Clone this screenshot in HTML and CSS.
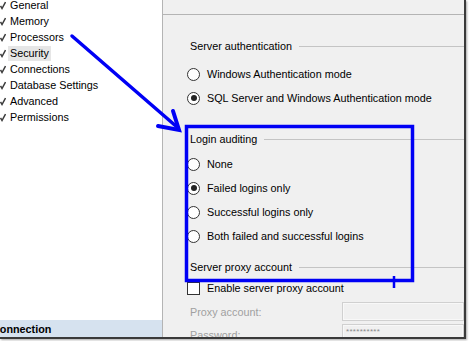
FILE: index.html
```html
<!DOCTYPE html>
<html>
<head>
<meta charset="utf-8">
<link rel="stylesheet" href="styles.css">
</head>
<body>
<div class="frame">
  <div class="left">
    <div class="nav">
      <div class="nav-item"><svg class="ico" viewBox="0 0 6 9" width="6" height="9"><path d="M0.5 5 L2 7.5 L5.5 1" fill="none" stroke="#3c3c3c" stroke-width="1.5"/></svg><span class="nav-label">General</span></div>
      <div class="nav-item"><svg class="ico" viewBox="0 0 6 9" width="6" height="9"><path d="M0.5 5 L2 7.5 L5.5 1" fill="none" stroke="#3c3c3c" stroke-width="1.5"/></svg><span class="nav-label">Memory</span></div>
      <div class="nav-item"><svg class="ico" viewBox="0 0 6 9" width="6" height="9"><path d="M0.5 5 L2 7.5 L5.5 1" fill="none" stroke="#3c3c3c" stroke-width="1.5"/></svg><span class="nav-label">Processors</span></div>
      <div class="nav-item"><svg class="ico" viewBox="0 0 6 9" width="6" height="9"><path d="M0.5 5 L2 7.5 L5.5 1" fill="none" stroke="#3c3c3c" stroke-width="1.5"/></svg><span class="nav-label selected">Security</span></div>
      <div class="nav-item"><svg class="ico" viewBox="0 0 6 9" width="6" height="9"><path d="M0.5 5 L2 7.5 L5.5 1" fill="none" stroke="#3c3c3c" stroke-width="1.5"/></svg><span class="nav-label">Connections</span></div>
      <div class="nav-item"><svg class="ico" viewBox="0 0 6 9" width="6" height="9"><path d="M0.5 5 L2 7.5 L5.5 1" fill="none" stroke="#3c3c3c" stroke-width="1.5"/></svg><span class="nav-label">Database Settings</span></div>
      <div class="nav-item"><svg class="ico" viewBox="0 0 6 9" width="6" height="9"><path d="M0.5 5 L2 7.5 L5.5 1" fill="none" stroke="#3c3c3c" stroke-width="1.5"/></svg><span class="nav-label">Advanced</span></div>
      <div class="nav-item"><svg class="ico" viewBox="0 0 6 9" width="6" height="9"><path d="M0.5 5 L2 7.5 L5.5 1" fill="none" stroke="#3c3c3c" stroke-width="1.5"/></svg><span class="nav-label">Permissions</span></div>
    </div>
    <div class="conn-bar"><span class="conn-text">Connection</span></div>
  </div>
  <div class="right">
    <div class="toolbar"></div>
    <div class="content">
      <div class="group-head first"><span>Server authentication</span><div class="rule"></div></div>
      <div class="options opts1">
        <div class="opt"><span class="radio"></span><span>Windows Authentication mode</span></div>
        <div class="opt"><span class="radio checked"></span><span>SQL Server and Windows Authentication mode</span></div>
      </div>
      <div class="group-head second"><span>Login auditing</span><div class="rule"></div></div>
      <div class="options opts2">
        <div class="opt"><span class="radio"></span><span>None</span></div>
        <div class="opt"><span class="radio checked"></span><span>Failed logins only</span></div>
        <div class="opt"><span class="radio"></span><span>Successful logins only</span></div>
        <div class="opt"><span class="radio"></span><span>Both failed and successful logins</span></div>
      </div>
      <div class="group-head third"><span>Server proxy account</span><div class="rule"></div></div>
      <div class="check-row"><span class="checkbox"></span><span>Enable server proxy account</span></div>
      <div class="field-row proxy"><span class="field-label">Proxy account:</span><div class="textbox"></div></div>
      <div class="field-row pass"><span class="field-label">Password:</span><div class="textbox"><span class="stars">**********</span></div></div>
    </div>
  </div>
</div>
<svg class="annot" width="469" height="341" viewBox="0 0 469 341">
  <line x1="72" y1="36" x2="177" y2="127" stroke="#0000f5" stroke-width="3.5" stroke-linecap="round"/>
  <polyline points="158,126 179,130 173,111" fill="none" stroke="#0000f5" stroke-width="4" stroke-linejoin="miter" stroke-linecap="round"/>
  <rect x="186.5" y="126.5" width="226" height="154" fill="none" stroke="#0000f5" stroke-width="3.5"/>
  <line x1="394" y1="276" x2="394" y2="288" stroke="#0000f5" stroke-width="2.5"/>
</svg>
</body>
</html>
```
FILE: styles.css
```css
html, body {
  margin: 0;
  padding: 0;
}
body {
  width: 469px;
  height: 341px;
  background: #ffffff;
  position: relative;
  overflow: hidden;
  font-family: "Liberation Sans", Arial, sans-serif;
  font-size: 10.8px;
  color: #000;
}
.frame {
  display: flex;
  width: 466px;
  height: 339px;
  box-sizing: border-box;
  border-right: 2px solid #3a3a3a;
  border-bottom: 2px solid #3a3a3a;
  box-shadow: 1px 1px 2px rgba(0, 0, 0, 0.35);
  overflow: hidden;
}
.left {
  width: 162px;
  flex: none;
  background: #ffffff;
  border-right: 1px solid #b4b4b4;
  display: flex;
  flex-direction: column;
}
.nav {
  margin-top: -3px;
}
.nav-item {
  height: 16px;
  display: flex;
  align-items: center;
}
.ico {
  flex: none;
  margin-right: 4px;
}
.nav-label {
  white-space: nowrap;
}
.nav-label.selected {
  background: #e6e6e6;
  margin-left: -2px;
  padding: 0 2px 0 2px;
  line-height: 15px;
}
.conn-bar {
  margin-top: auto;
  height: 17px;
  background: #d6e2ef;
  display: flex;
  align-items: center;
  overflow: hidden;
  font-weight: bold;
}
.conn-text {
  margin-left: -8px;
  white-space: nowrap;
}
.right {
  flex: 1;
  min-width: 0;
  background: #f0f0f0;
  display: flex;
  flex-direction: column;
  overflow: hidden;
}
.toolbar {
  height: 14px;
  flex: none;
  border-bottom: 1px solid #b4b4b4;
}
.content {
  padding-left: 24px;
}
.group-head {
  display: flex;
  align-items: center;
  height: 14px;
  padding-left: 3px;
  white-space: nowrap;
}
.group-head.first { margin-top: 24px; }
.group-head.second { margin-top: 22px; }
.group-head.third { margin-top: 12px; }
.rule {
  flex: 1;
  border-top: 1px solid #c4c4c4;
  margin-left: 7px;
}
.opts1 { margin-top: 9px; }
.opts2 { margin-top: 6px; }
.opt {
  height: 24px;
  display: flex;
  align-items: center;
  white-space: nowrap;
}
.radio {
  width: 13px;
  height: 13px;
  flex: none;
  box-sizing: border-box;
  border: 1px solid #333;
  border-radius: 50%;
  background: #fff;
  margin-right: 7px;
  position: relative;
}
.radio.checked::after {
  content: "";
  position: absolute;
  left: 2.5px;
  top: 2.5px;
  width: 6px;
  height: 6px;
  border-radius: 50%;
  background: #222;
}
.check-row {
  margin-top: 4px;
  height: 20px;
  display: flex;
  align-items: center;
  white-space: nowrap;
}
.checkbox {
  width: 13px;
  height: 13px;
  flex: none;
  box-sizing: border-box;
  border: 1px solid #333;
  background: #fff;
  margin-right: 7px;
}
.field-row {
  display: flex;
  align-items: center;
  height: 19px;
  padding-left: 3px;
}
.field-row.proxy { margin-top: 4px; }
.field-row.pass { margin-top: 3px; height: 21px; }
.field-label {
  width: 152px;
  flex: none;
  color: #a0a0a0;
  white-space: nowrap;
}
.textbox {
  flex: 1;
  align-self: stretch;
  box-sizing: border-box;
  border: 1px solid #d0d0d0;
  box-shadow: inset 0 0 0 1px #f8f8f8;
  background: #f0f0f0;
  display: flex;
  align-items: center;
  padding-left: 3px;
}
.stars {
  font-size: 8px;
  color: #8a8a8a;
  letter-spacing: 0.3px;
  margin-top: -6px;
}
.annot {
  position: absolute;
  left: 0;
  top: 0;
  pointer-events: none;
}
```
